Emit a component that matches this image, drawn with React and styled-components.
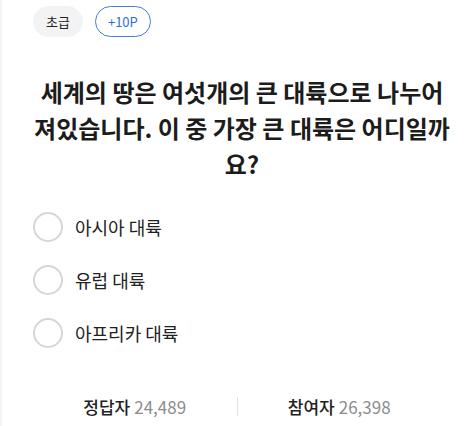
import React from 'react';
import styled, { createGlobalStyle } from 'styled-components';

const GlobalStyle = createGlobalStyle`
  html, body {
    margin: 0;
    padding: 0;
    background: #fff;
  }
  body {
    font-family: "Noto Sans CJK KR", "Noto Sans", sans-serif;
    color: #222;
  }
`;

const Page = styled.div`
  min-height: 426px;
  box-sizing: border-box;
  border-left: 2px solid #f3f3f3;
  padding: 6px 33px 0 31px;
  display: flex;
  flex-direction: column;
`;

const Tags = styled.div`
  display: flex;
  gap: 12px;
`;

const Tag = styled.span`
  display: inline-flex;
  align-items: center;
  justify-content: center;
  height: 31px;
  box-sizing: border-box;
  padding: 0 12px;
  border-radius: 16px;
  font-size: 13px;
  background: ${p => (p.$outline ? '#fff' : '#f3f3f3')};
  color: ${p => (p.$outline ? '#2f6fd0' : '#222')};
  border: 1px solid ${p => (p.$outline ? '#3f7fdb' : '#f3f3f3')};
`;

/* wide enough for line two, narrow enough that "져" drops from line one */
const Question = styled.h2`
  margin: 37px -10px 0 0;
  text-align: center;
  font-size: 24px;
  line-height: 36px;
  font-weight: 700;
  color: #1c1c1c;
  word-break: break-all;
`;

const Options = styled.ul`
  list-style: none;
  margin: 30px 0 0;
  padding: 0;
  display: flex;
  flex-direction: column;
  gap: 23px;
`;

const Option = styled.li`
  display: flex;
  align-items: center;
  gap: 12px;
  font-size: 18px;
  color: #222;
  cursor: pointer;
`;

const Radio = styled.span`
  width: 30px;
  height: 30px;
  box-sizing: border-box;
  border-radius: 50%;
  border: 2px solid #d6d6d6;
  flex-shrink: 0;
`;

const Stats = styled.div`
  margin-top: 46px;
  display: grid;
  grid-template-columns: 1fr 1px 1fr;
  align-items: center;
`;

const Stat = styled.div`
  text-align: center;
  font-size: 17px;
  white-space: nowrap;
`;

const Label = styled.span`
  font-weight: 500;
  color: #222;
`;

const Count = styled.span`
  color: #8c8c8c;
  margin-left: 4px;
`;

const Divider = styled.span`
  width: 1px;
  height: 19px;
  background: #e2e2e2;
`;

const options = ['아시아 대륙', '유럽 대륙', '아프리카 대륙'];

function App() {
  return (
    <>
      <GlobalStyle />
      <Page>
        <Tags>
          <Tag>초급</Tag>
          <Tag $outline>+10P</Tag>
        </Tags>
        <Question>
          세계의 땅은 여섯개의 큰 대륙으로 나누어져있습니다. 이 중 가장 큰 대륙은 어디일까요?
        </Question>
        <Options>
          {options.map(o => (
            <Option key={o}>
              <Radio />
              {o}
            </Option>
          ))}
        </Options>
        <Stats>
          <Stat>
            <Label>정답자</Label>
            <Count>24,489</Count>
          </Stat>
          <Divider />
          <Stat>
            <Label>참여자</Label>
            <Count>26,398</Count>
          </Stat>
        </Stats>
      </Page>
    </>
  );
}

export default App;
